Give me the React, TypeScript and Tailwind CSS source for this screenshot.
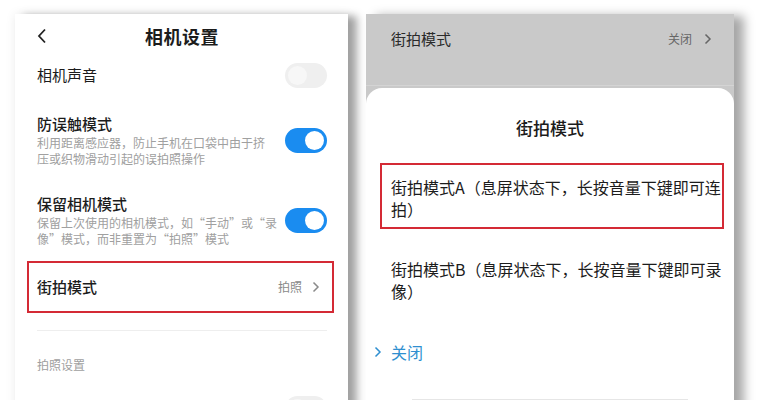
import React from 'react';

const font = { fontFamily: '"Noto Sans CJK SC", "Noto Sans", sans-serif' };

function Toggle({ on }: { on: boolean }) {
  return (
    <div
      className={`flex h-[25px] w-[42px] shrink-0 items-center rounded-full px-[3px] ${
        on ? 'justify-end bg-[#1a8cf0]' : 'justify-start bg-[#efefef]'
      }`}
    >
      <div className={`h-[19px] w-[19px] rounded-full ${on ? 'bg-white' : 'bg-[#f7f7f7]'}`} />
    </div>
  );
}

function Chevron({ className }: { className?: string }) {
  return (
    <svg width="8" height="12" viewBox="0 0 8 12" className={className}>
      <path d="M1.5 1.5 L6 6 L1.5 10.5" fill="none" stroke="currentColor" strokeWidth="1.5" />
    </svg>
  );
}

export default function App() {
  return (
    <div className="h-[400px] w-[764px] overflow-hidden bg-white" style={font}>
      <div className="flex gap-[18px] pl-[15px] pt-[14px]">
        {/* Left: camera settings */}
        <div className="h-[420px] w-[333px] bg-white pl-[22px] pr-[21px] text-[#1c1c1c] shadow-[0_0_10px_rgba(0,0,0,0.08),9px_2px_8px_rgba(0,0,0,0.35)]">
          <div className="relative flex h-[44px] items-center justify-center">
            <svg width="10" height="16" viewBox="0 0 10 16" className="absolute left-0 top-[14px] text-[#222]">
              <path d="M8 1.5 L2 8 L8 14.5" fill="none" stroke="currentColor" strokeWidth="1.8" />
            </svg>
            <span className="text-[18px] font-bold tracking-[0.5px]">相机设置</span>
          </div>

          <div className="flex h-[34px] items-center justify-between">
            <span className="text-[15px]">相机声音</span>
            <Toggle on={false} />
          </div>

          <div className="mt-[21px] flex items-center justify-between">
            <div>
              <div className="text-[15px] font-medium leading-[22px]">防误触模式</div>
              <div className="w-[232px] text-[12px] leading-[16px] text-[#a0a0a0]">
                利用距离感应器，防止手机在口袋中由于挤压或织物滑动引起的误拍照操作
              </div>
            </div>
            <Toggle on={true} />
          </div>

          <div className="mt-[26px] flex items-center justify-between">
            <div>
              <div className="text-[15px] font-medium leading-[22px]">保留相机模式</div>
              <div className="w-[240px] text-[12px] leading-[16px] text-[#a0a0a0]">
                保留上次使用的相机模式，如“手动”或“录像”模式，而非重置为“拍照”模式
              </div>
            </div>
            <Toggle on={true} />
          </div>

          <div className="-ml-[10px] -mr-[7px] mt-[14px] flex h-[52px] items-center justify-between border-2 border-[#d42a35] pl-[8px] pr-[12px]">
            <span className="text-[15px] font-medium">街拍模式</span>
            <div className="flex items-center gap-[10px] text-[#8a8a8a]">
              <span className="text-[12px]">拍照</span>
              <Chevron />
            </div>
          </div>

          <div className="mt-[17px] h-px bg-[#eeeeee]" />

          <div className="mt-[26px] text-[12px] leading-[16px] text-[#a0a0a0]">拍照设置</div>

          <div className="mt-[18px] flex h-[34px] items-center justify-between">
            <span className="text-[15px]">时间水印</span>
            <Toggle on={false} />
          </div>
        </div>

        {/* Right: street mode sheet */}
        <div className="flex h-[420px] w-[368px] flex-col bg-[#c9c9c9] shadow-[10px_2px_10px_rgba(0,0,0,0.35)]">
          <div className="flex h-[50px] items-center justify-between pl-[25px] pr-[22px]">
            <span className="text-[15px] text-[#2a2a2a]">街拍模式</span>
            <div className="flex items-center gap-[12px] text-[#666]">
              <span className="text-[12px]">关闭</span>
              <Chevron />
            </div>
          </div>
          <div className="mt-[21px] h-px bg-[#d4d4d4]" />
          <div className="mt-[2px] flex-1 rounded-t-[16px] bg-white text-[#1c1c1c]">
            <div className="pt-[28px] text-center text-[17px] font-medium leading-[24px]">街拍模式</div>
            <div className="ml-[14px] mt-[23px] h-[66px] w-[344px] border-2 border-[#d42a35] pl-[9px] pt-[11px]">
              <div className="w-[334px] text-[16px] leading-[22px]">
                街拍模式A（息屏状态下，长按音量下键即可连拍）
              </div>
            </div>
            <div className="ml-[25px] mt-[29px] w-[334px] text-[16px] leading-[22px]">
              街拍模式B（息屏状态下，长按音量下键即可录像）
            </div>
            <div className="ml-[8px] mt-[39px] flex items-center gap-[9px] text-[#2f8fd0]">
              <Chevron />
              <span className="text-[16px] leading-[22px]">关闭</span>
            </div>
            <div className="mx-[46px] mt-[36px] h-px bg-[#e6e6e6]" />
          </div>
        </div>
      </div>
    </div>
  );
}
